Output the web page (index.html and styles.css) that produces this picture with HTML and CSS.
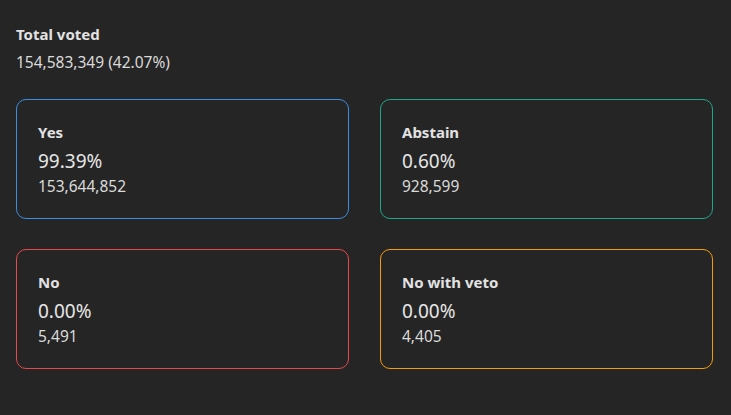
FILE: index.html
```html
<!DOCTYPE html>
<html>
<head>
<meta charset="utf-8">
<link rel="stylesheet" href="styles.css">
</head>
<body>
<div class="page">
  <div class="total">
    <div class="total-label">Total voted</div>
    <div class="total-value">154,583,349 (42.07%)</div>
  </div>
  <div class="grid">
    <div class="card card-yes">
      <div class="card-label">Yes</div>
      <div class="card-pct">99.39%</div>
      <div class="card-count">153,644,852</div>
    </div>
    <div class="card card-abstain">
      <div class="card-label">Abstain</div>
      <div class="card-pct">0.60%</div>
      <div class="card-count">928,599</div>
    </div>
    <div class="card card-no">
      <div class="card-label">No</div>
      <div class="card-pct">0.00%</div>
      <div class="card-count">5,491</div>
    </div>
    <div class="card card-veto">
      <div class="card-label">No with veto</div>
      <div class="card-pct">0.00%</div>
      <div class="card-count">4,405</div>
    </div>
  </div>
</div>
</body>
</html>
```
FILE: styles.css
```css
html, body {
  margin: 0;
  padding: 0;
  background: #252525;
}
body {
  font-family: "Noto Sans", "Open Sans", sans-serif;
  color: #e6e6e6;
  width: 731px;
  height: 415px;
  overflow: hidden;
}
.page {
  padding: 24px 18px 0 16px;
}
.total-label {
  font-size: 15px;
  font-weight: 700;
  line-height: 20px;
  color: #e2e2e2;
}
.total-value {
  font-size: 15.5px;
  line-height: 20px;
  margin-top: 8px;
  color: #dadada;
}
.grid {
  margin-top: 27px;
  display: grid;
  grid-template-columns: 1fr 1fr;
  column-gap: 31px;
  row-gap: 30px;
}
.card {
  border: 1px solid #3b8fe0;
  border-radius: 10px;
  height: 120px;
  box-sizing: border-box;
  padding: 22px 21px 0;
}
.card-yes { border-color: #3c8ee3; }
.card-abstain { border-color: #1ea688; }
.card-no { border-color: #e5484d; }
.card-veto { border-color: #f59a0c; }
.card-label {
  font-size: 15px;
  font-weight: 700;
  line-height: 20px;
  color: #e2e2e2;
}
.card-pct {
  font-size: 19px;
  line-height: 26px;
  margin-top: 6px;
  color: #e6e6e6;
}
.card-count {
  font-size: 15.5px;
  line-height: 20px;
  margin-top: 2px;
  color: #dadada;
}
```
